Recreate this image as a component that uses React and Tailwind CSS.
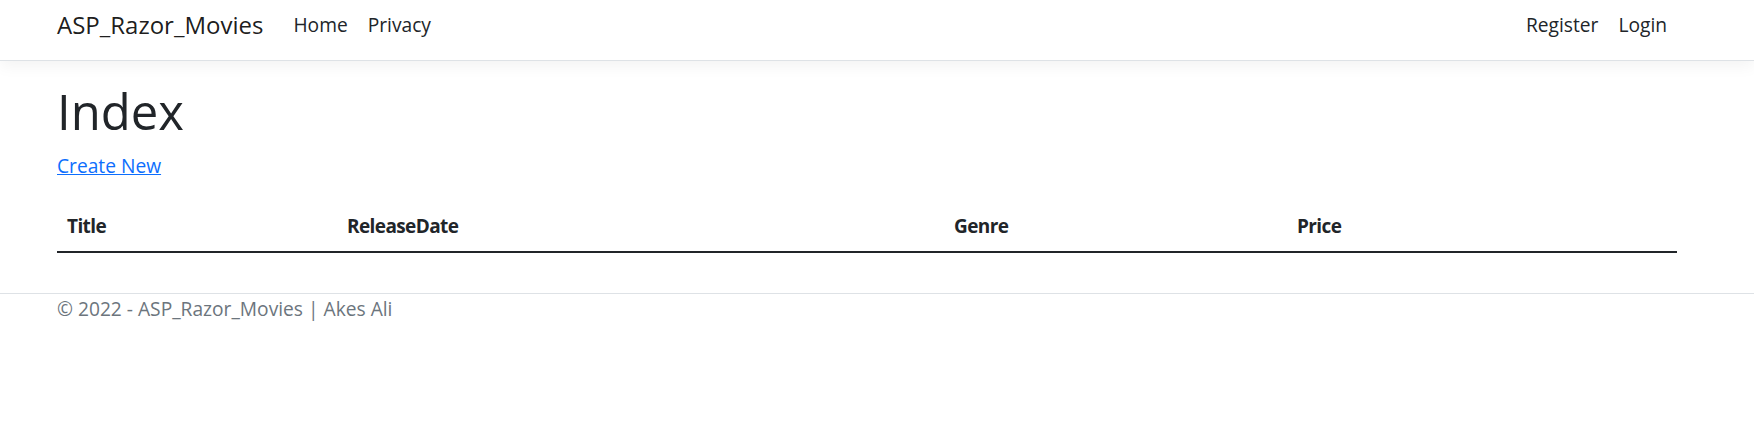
import React from 'react';

const font = { fontFamily: '"Open Sans", "Noto Sans", sans-serif' };

function NavLink({ children }) {
  return (
    <a href="#" className="block px-[10px] pt-[10px] text-[19.2px] leading-[30px] text-[#212529] no-underline">
      {children}
    </a>
  );
}

function Header() {
  return (
    <header className="h-[61px] border-b border-[#dee2e6] bg-white shadow-[0_5px_15px_rgba(0,0,0,0.05)]">
      <div className="ml-[42px] flex w-[1650px] items-start px-[15px]">
        <a href="#" className="mr-[20px] py-[6px] text-[24px] leading-[37.5px] text-black/90 no-underline">
          ASP_Razor_Movies
        </a>
        <nav className="flex flex-1">
          <NavLink>Home</NavLink>
          <NavLink>Privacy</NavLink>
          <div className="ml-auto flex">
            <NavLink>Register</NavLink>
            <NavLink>Login</NavLink>
          </div>
        </nav>
      </div>
    </header>
  );
}

const columns = [
  { label: 'Title', width: 'w-[280px]' },
  { label: 'ReleaseDate', width: 'w-[607px]' },
  { label: 'Genre', width: 'w-[343px]' },
  { label: 'Price', width: '' }
];

function MoviesTable() {
  return (
    <table className="mb-[20px] w-full border-collapse text-[#212529]">
      <thead>
        <tr className="border-b-2 border-[#212529]">
          {columns.map((col) => (
            <th
              key={col.label}
              className={`${col.width} px-[10px] py-[10px] text-left text-[19px] font-bold leading-[30px] tracking-[-0.6px]`}
            >
              {col.label}
            </th>
          ))}
        </tr>
      </thead>
      <tbody />
    </table>
  );
}

export default function App() {
  return (
    <div className="min-h-[442px] bg-white text-[19.2px] leading-[30px] text-[#212529]" style={font}>
      <Header />
      <main className="ml-[42px] w-[1650px] px-[15px] pt-[20px] pb-[20px]">
        <h1 className="mb-[10px] text-[49px] font-medium leading-[60px]">Index</h1>
        <p className="mb-[20px]">
          <a href="#" className="text-[#0d6efd] underline">Create New</a>
        </p>
        <MoviesTable />
      </main>
      <footer className="border-t border-[#dee2e6] text-[#6c757d]">
        <div className="ml-[42px] w-[1650px] px-[15px] leading-[30px]">
          © 2022 - ASP_Razor_Movies | Akes Ali
        </div>
      </footer>
    </div>
  );
}
